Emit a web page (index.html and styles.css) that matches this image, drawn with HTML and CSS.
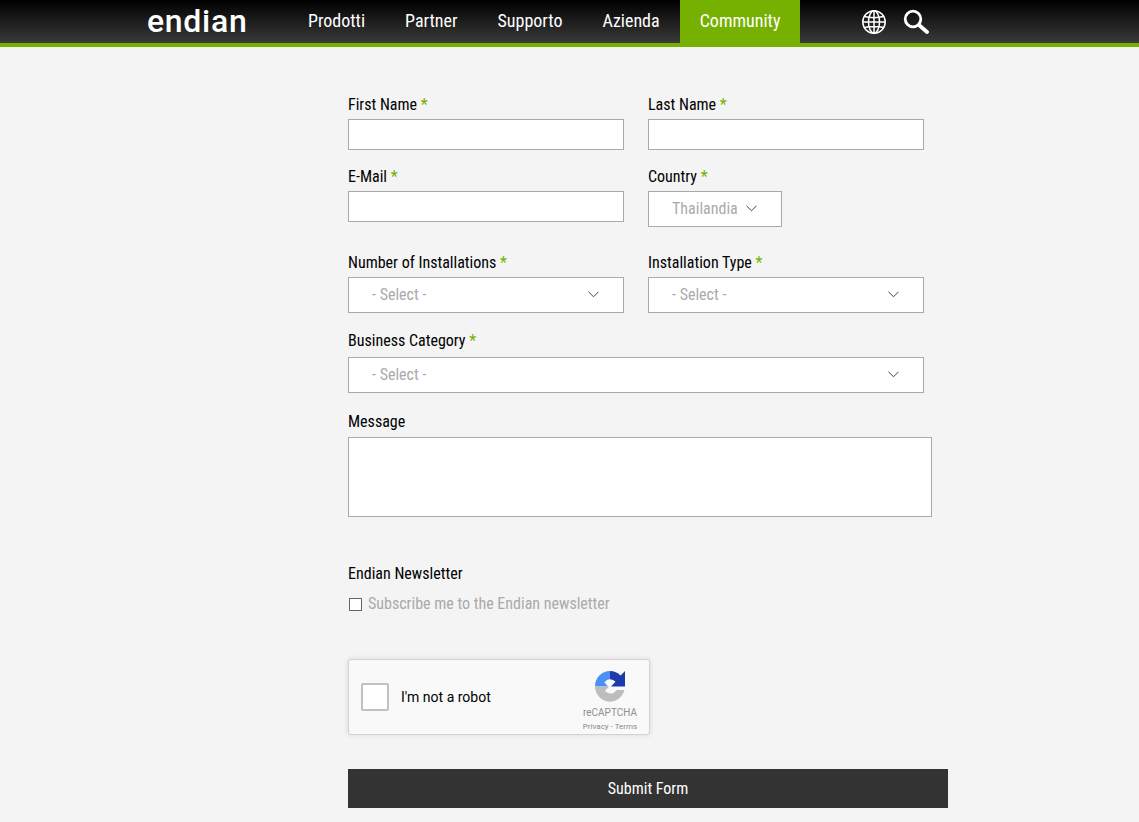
FILE: index.html
```html
<!DOCTYPE html>
<html lang="en">
<head>
<meta charset="utf-8">
<title>Endian</title>
<link rel="stylesheet" href="styles.css">
</head>
<body>
<header class="site-header">
  <div class="header-inner">
    <a class="logo">endian</a>
    <nav class="nav">
      <a class="nav-item">Prodotti</a>
      <a class="nav-item">Partner</a>
      <a class="nav-item">Supporto</a>
      <a class="nav-item">Azienda</a>
      <a class="nav-item active">Community</a>
    </nav>
    <div class="tools">
      <svg class="globe" width="26" height="26" viewBox="0 0 26 26" fill="none" stroke="#fff" stroke-width="1.5"><circle cx="13" cy="13" r="11.2"/><ellipse cx="13" cy="13" rx="5.5" ry="11.2"/><path d="M13 2v22M2 13h22M3.5 7.500c5 1.500 14 1.500 19 0M3.500 18.500c5-1.500 14-1.500 19 0"/></svg>
      <svg class="search" width="26" height="26" viewBox="0 0 26 26" fill="none" stroke="#fff"><circle cx="10" cy="10" r="7.800" stroke-width="2.800"/><path d="M16.500 16.500l7.500 6.500" stroke-width="3.800" stroke-linecap="round"/></svg>
    </div>
  </div>
</header>
<main class="form">
  <div class="row">
    <label class="field w276"><span class="lbl">First Name <i>*</i></span><input class="input"></label>
    <label class="field w276"><span class="lbl">Last Name <i>*</i></span><input class="input"></label>
  </div>
  <div class="row r2">
    <label class="field w276"><span class="lbl">E-Mail <i>*</i></span><input class="input"></label>
    <div class="field w276"><span class="lbl">Country <i>*</i></span>
      <div class="select country"><span>Thailandia</span><svg class="chev" viewBox="0 0 12 7"><path d="M.5.5 6 6 11.500.5"/></svg></div></div>
  </div>
  <div class="row r3">
    <div class="field w276"><span class="lbl">Number of Installations <i>*</i></span>
      <div class="select"><span>- Select -</span><svg class="chev" viewBox="0 0 12 7"><path d="M.5.5 6 6 11.500.5"/></svg></div></div>
    <div class="field w276"><span class="lbl">Installation Type <i>*</i></span>
      <div class="select"><span>- Select -</span><svg class="chev" viewBox="0 0 12 7"><path d="M.5.5 6 6 11.500.5"/></svg></div></div>
  </div>
  <div class="field w576 r4"><span class="lbl">Business Category <i>*</i></span>
    <div class="select"><span>- Select -</span><svg class="chev" viewBox="0 0 12 7"><path d="M.5.5 6 6 11.500.5"/></svg></div></div>
  <div class="field r5"><span class="lbl">Message</span><div class="textarea"></div></div>
  <div class="news">
    <span class="lbl">Endian Newsletter</span>
    <div class="check"><span class="box"></span><span class="check-text">Subscribe me to the Endian newsletter</span></div>
  </div>
  <div class="recaptcha">
    <span class="rc-box"></span>
    <span class="rc-text">I'm not a robot</span>
    <div class="rc-brand">
      <svg width="30" height="33" viewBox="0 0 30 32" preserveAspectRatio="none">
        <path d="M0 16A15 15 0 0 1 15 1V9A7 7 0 0 0 9.500 12L13 16Z" fill="#4a90f5"/>
        <path d="M15 1A15 15 0 0 1 25.600 5.400L30 1V16H16L20.500 11.500A7 7 0 0 0 15 9Z" fill="#1c3aa9"/>
        <path d="M0 16H14L10 20A7 7 0 0 0 21.500 19.500L29.500 19.500A15 15 0 0 1 0 16Z" fill="#bdbdbd"/>
      </svg>
      <span class="rc-name">reCAPTCHA</span>
      <span class="rc-links">Privacy - Terms</span>
    </div>
  </div>
  <div class="submit">Submit Form</div>
</main>
</body>
</html>
```
FILE: styles.css
```css
* { box-sizing: border-box; }
html, body { margin: 0; padding: 0; }
body { background: #f4f4f4; font-family: "Roboto Condensed", Roboto, sans-serif; font-stretch: condensed; color: #000; height: 822px; overflow: hidden; }
.site-header { height: 47px; background: linear-gradient(#000, #3a3a3a); border-bottom: 4px solid #76b000; }
.header-inner { display: flex; height: 43px; padding-left: 147px; }
.logo { width: 141px; color: #fff; font: 500 32px/43px Roboto, sans-serif; letter-spacing: .7px; }
.nav { display: flex; }
.nav-item { color: #fff; font-size: 18px; line-height: 42px; padding: 0 20px; }
.nav-item.active { background: #76b000; }
.tools { display: flex; align-items: center; gap: 16px; margin-left: 61px; }
.form { padding: 48px 0 0 348px; width: 960px; }
.row { display: flex; gap: 24px; }
.field { display: block; }
.w276 { width: 276px; }
.w576 { width: 576px; }
.lbl { display: block; font-size: 16px; line-height: 20px; margin-bottom: 4px; }
.lbl i { color: #76b000; font-style: normal; }
.input { display: block; width: 100%; height: 31px; border: 1px solid #a9a9a9; background: #fff; margin: 0; padding: 0; }
.r2 { margin-top: 17px; }
.r3 { margin-top: 26px; }
.r4 { margin-top: 18px; }
.r4 .lbl { margin-bottom: 6px; }
.r5 { margin-top: 19px; }
.r5 .lbl { margin-bottom: 5px; }
.select { display: flex; align-items: center; justify-content: space-between; height: 36px; padding: 0 24px 2px 23px; border: 1px solid #a9a9a9; background: #fff; color: #aaa; font-size: 16px; }
.country { width: 134px; }
.chev { width: 11px; height: 7px; fill: none; stroke: #333; stroke-width: 1; }
.textarea { width: 584px; height: 80px; border: 1px solid #a9a9a9; background: #fff; }
.news { margin-top: 47px; }
.news .lbl { margin-bottom: 10px; }
.check { display: flex; align-items: center; gap: 6px; color: #aaa; font-size: 16px; line-height: 20px; }
.box { width: 13px; height: 13px; margin-left: 1px; border: 1px solid #666; background: #fff; }
.recaptcha { position: relative; display: flex; align-items: center; width: 302px; height: 76px; margin-top: 45px; background: #f9f9f9; border: 1px solid #d3d3d3; border-radius: 3px; box-shadow: 0 0 4px 1px rgba(0,0,0,.08); font-family: Roboto, sans-serif; font-stretch: normal; }
.rc-box { width: 28px; height: 28px; margin-left: 12px; background: #fff; border: 2px solid #c1c1c1; border-radius: 2px; }
.rc-text { margin-left: 12px; font-size: 14px; color: #000; }
.rc-brand { position: absolute; right: 6px; top: 10px; width: 66px; display: flex; flex-direction: column; align-items: center; }
.rc-name { font-size: 10px; line-height: 12px; margin-top: 4px; color: #8f8f8f; }
.rc-links { font-size: 8px; line-height: 10px; margin-top: 3px; color: #8a8a8a; font-weight: 400; }
.submit { width: 600px; height: 39px; margin-top: 34px; background: #333; color: #fff; font-size: 16px; line-height: 39px; text-align: center; }
```
